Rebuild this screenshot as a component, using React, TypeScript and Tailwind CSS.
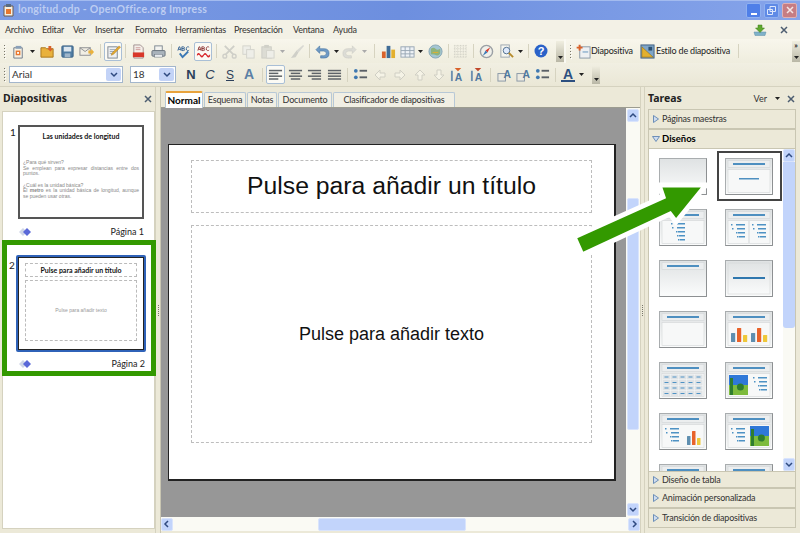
import React from "react";

const S = ({ w, children }: { w: string; children?: React.ReactNode }) => (
  <div className={`${w} h-full flex items-center justify-center shrink-0`}>{children}</div>
);
const Sep = ({ w }: { w: string }) => (
  <div className={`${w} h-full flex items-center justify-center shrink-0`}>
    <div className="w-px h-[14px] bg-[#d6d3c0]" />
  </div>
);
const Drop = ({ w, c = "#222" }: { w: string; c?: string }) => (
  <div className={`${w} h-full flex items-center justify-center shrink-0`}>
    <svg width="5" height="3" viewBox="0 0 5 3"><path d="M0 0h5L2.500 3z" fill={c} /></svg>
  </div>
);
const Grip = () => (
  <div className="w-[8px] shrink-0 h-full flex flex-col items-center justify-center gap-[2px]">
    {[0, 1, 2, 3, 4].map((i) => <div key={i} className="w-[1px] h-[1px] bg-[#77766a] shadow-[1px_1px_0_#fff]" />)}
  </div>
);
const Toggle = ({ w, children }: { w: string; children: React.ReactNode }) => (
  <div className={`${w} h-[19px] flex items-center justify-center shrink-0 bg-[#fbfaf4] border border-[#a9bfd6] rounded-[2px]`}>{children}</div>
);
const Over = ({ cls }: { cls: string }) => (
  <div className={`${cls} w-[8px] bg-gradient-to-b from-[#f0eee0] to-[#b9b7a6] flex items-end justify-center pb-[3px] shrink-0`}>
    <svg width="5" height="3" viewBox="0 0 5 3"><path d="M0 0h5L2.500 3z" fill="#222" /></svg>
  </div>
);

const I = ({ children }: { children: React.ReactNode }) => <svg width="15" height="15" viewBox="0 0 16 16">{children}</svg>;

const New = () => <I><path d="M3 4h9v11H3z" fill="#f6f1e4" stroke="#6e7a8a" /><path d="M5 2h6v3H5z" fill="#8aa0b8" /><rect x="5" y="7" width="5" height="5" fill="#e8772e" /><rect x="6.500" y="8.500" width="2" height="2" fill="#fff" /></I>;
const Open = () => <I><path d="M1 4h5l1 1h7v9H1z" fill="#e9b13c" stroke="#a9761c" /><path d="M9 2l3 0 0 3 2 0-3 3-3-3 1 0z" fill="#d9622b" /></I>;
const Save = () => <I><rect x="2" y="2" width="12" height="12" rx="1" fill="#4f7ca3" stroke="#3b6185" /><rect x="4" y="3" width="8" height="5" fill="#dce6ef" /><rect x="5" y="10" width="6" height="4" fill="#9fb6cb" /></I>;
const Mail = () => <I><rect x="1" y="4" width="11" height="8" fill="#f2efe4" stroke="#8b8d90" /><path d="M1 4l5.500 4L12 4" fill="none" stroke="#8b8d90" /><path d="M10 7h3V5l3 3.500-3 3.500V10h-3z" fill="#e9b13c" /></I>;
const Edit = () => <I><rect x="2" y="3" width="10" height="12" fill="#eef0f2" stroke="#7d8791" /><path d="M4 6h6M4 8h5M4 10h4" stroke="#9aa5af" /><path d="M14 2l1.500 1.500L8 11l-2.500 1 1-2.500z" fill="#e3a92e" stroke="#a9761c" strokeWidth=".5" /></I>;
const Pdf = () => <I><path d="M3 1h7l3 3v11H3z" fill="#f5f0ea" stroke="#a08f8f" /><rect x="2" y="9" width="12" height="5" fill="#d8362a" /><path d="M5 4h5M5 6h5" stroke="#c99" /></I>;
const Print = () => <I><rect x="4" y="2" width="8" height="6" fill="#f4f4f0" stroke="#7d8791" /><rect x="1" y="7" width="14" height="6" rx="1" fill="#a9b3bc" stroke="#66717c" /><rect x="4" y="11" width="8" height="3" fill="#e9ecef" stroke="#66717c" strokeWidth=".5" /></I>;
const Abc = ({ wave }: { wave?: boolean }) => (
  <I>
    <path d="M2 7l1.200-4h.8L5.200 7M2.600 5.800H4.600M6.200 3h1.600q1.200 0 1.200 1 0 1-1.200 1H6.200zM6.200 5h1.800q1.300 0 1.300 1t-1.300 1H6.200zM14 3.500q-.8-.7-1.700-.5-1.300.3-1.300 2t1.300 2q.9.2 1.700-.5" fill="none" stroke={wave ? "#8a2e2e" : "#2c5b8f"} strokeWidth=".9" />
    {wave ? <path d="M1 11q1.700-3 3.500 0t3.500 0 3.500 0 3.500 0v2q-1.700 3-3.500 0t-3.500 0-3.500 0-3.500 0z" fill="#d8262a" />
      : <path d="M4 10l3 4 6-6" fill="none" stroke="#3a78b5" strokeWidth="2" />}
  </I>
);
const Cut = () => <I><path d="M3 2l9 9M13 2l-9 9" stroke="#cfcfc8" strokeWidth="2" /><circle cx="3" cy="13" r="2" fill="none" stroke="#cfcfc8" strokeWidth="1.500" /><circle cx="13" cy="13" r="2" fill="none" stroke="#cfcfc8" strokeWidth="1.500" /></I>;
const Copy = () => <I><rect x="2" y="2" width="8" height="9" fill="#eeeee8" stroke="#d3d3cc" /><rect x="6" y="6" width="8" height="9" fill="#eeeee8" stroke="#d3d3cc" /></I>;
const Paste = () => <I><rect x="2" y="3" width="10" height="12" fill="#dcdcd4" stroke="#ccccc4" /><rect x="4.500" y="1" width="5" height="3" fill="#d0d0c8" /><rect x="7" y="7" width="8" height="8" fill="#eeeee8" stroke="#d3d3cc" /></I>;
const Brush = () => <I><path d="M14 1l1 1-6 7-2-2z" fill="#d8d8d2" /><path d="M7 7l2 2-3 5-5 1z" fill="#cfcfc8" /></I>;
const Undo = () => <I><path d="M5 2L1 6l4 4V7.500h4q3 0 3 2.500t-3 2.500H6V15h3.500Q15 15 15 10t-5.500-5H5z" fill="#6f9ac5" stroke="#3f6f9f" strokeWidth=".6" /></I>;
const Redo = () => <I><path d="M11 2l4 4-4 4V7.500H7q-3 0-3 2.500t3 2.500h3V15H6.500Q1 15 1 10t5.500-5H11z" fill="#dcdcd6" stroke="#c9c9c2" strokeWidth=".6" /></I>;
const Chart = () => <I><rect x="1" y="8" width="4" height="7" fill="#d9622b" /><rect x="6" y="2" width="4" height="13" fill="#3f6c96" /><rect x="11" y="6" width="4" height="9" fill="#e3b02e" /></I>;
const Table = () => <I><rect x="1" y="3" width="14" height="11" fill="#eef2f6" stroke="#98a6b4" /><path d="M1 7h14M1 10.500h14M5.500 3v11M10.500 3v11" stroke="#98a6b4" /></I>;
const Globe = () => <I><circle cx="8" cy="8" r="7" fill="#a4c6d3" stroke="#87a6b4" /><path d="M3 5q3-2 5 0t5 0v5q-2 3-4 2t-6-1z" fill="#8fb37c" /><path d="M5 9h6" stroke="#e3b02e" /></I>;
const Grid = () => <I><path d="M1 2h14M1 5h14M1 8h14M1 11h14M1 14h14M2 1v14M5 1v14M8 1v14M11 1v14M14 1v14" stroke="#d0cfc4" strokeDasharray="1 1" /></I>;
const Compass = () => <I><circle cx="8" cy="8" r="6.500" fill="#f0f0ea" stroke="#9ba0a5" strokeWidth="1.500" /><path d="M12 3.500L9 9 7 7z" fill="#d8362a" /><path d="M4 12.500L9 9 7 7z" fill="#3a78b5" /></I>;
const Zoom = () => <I><rect x="2" y="1" width="9" height="13" fill="#f5f5ee" stroke="#9aa5af" /><circle cx="8" cy="7" r="3.500" fill="#dfeafc" stroke="#4d6d8e" /><path d="M10.500 9.500L15 14" stroke="#b58a2a" strokeWidth="2" /></I>;
const Help = () => <svg width="14" height="14" viewBox="0 0 14 14"><circle cx="7" cy="7" r="6.500" fill="#2a62c8" /><text x="7" y="11" textAnchor="middle" fontSize="11" fontWeight="700" fill="#fff" fontFamily="Liberation Sans">?</text></svg>;
const SlideI = () => <I><rect x="4" y="3" width="11" height="12" fill="#eef0f2" stroke="#8796a5" /><path d="M1 4h3V1h3v3h3v3H7v3H4V7H1z" fill="#d9622b" transform="scale(.7)" /><rect x="7" y="8" width="6" height="1" fill="#5f8fba" /></I>;
const StyleI = () => <I><rect x="1" y="1" width="14" height="14" fill="#7ea5c8" stroke="#3f5f80" /><path d="M2 14L14 14 2 3z" fill="#e3b02e" stroke="#8f6d1a" strokeWidth=".6" /><rect x="9" y="3" width="4" height="4" fill="#2c4f70" /></I>;
const Arrow = ({ cls = "" }: { cls?: string }) => <svg className={cls} width="12" height="12" viewBox="0 0 12 12"><path d="M1 6l5-5v3h5v4H6v3z" fill="#f5f3e6" stroke="#d0cfc4" /></svg>;
const AlignI = ({ v }: { v: number }) => {
  const rows = v === 0 ? [[1, 14], [1, 10], [1, 14], [1, 10]] : v === 1 ? [[1, 14], [3, 10], [1, 14], [3, 10]] : v === 2 ? [[1, 14], [5, 10], [1, 14], [5, 10]] : [[1, 14], [1, 14], [1, 14], [1, 14]];
  return <I>{rows.map(([x, w], i) => <rect key={i} x={x} y={3 + i * 3} width={w} height="1.600" fill="#5e6368" />)}</I>;
};
const Letter = ({ t, cls }: { t: string; cls: string }) => <span className={`${cls} [font-family:'Liberation_Sans',sans-serif]`}>{t}</span>;
const TxtA = ({ top }: { top: string }) => <I><rect x="1" y="4" width="2" height="11" fill="#6c8fb0" /><text x="9" y="15" textAnchor="middle" fontSize="11" fontWeight="700" fill="#4f78a0" fontFamily="Liberation Sans">A</text><path d="M5 1h7l-3.500 3.500z" fill={top} /></I>;
const BoxA = () => <I><rect x="1" y="7" width="8" height="8" fill="#eceae0" stroke="#8796a5" /><text x="11" y="12" textAnchor="middle" fontSize="11" fontWeight="700" fill="#4f78a0" fontFamily="Liberation Sans">A</text></I>;
const Bull = () => <I><circle cx="3" cy="4" r="2" fill="#3f78b0" /><circle cx="3" cy="11" r="2" fill="#3f78b0" /><rect x="7" y="3" width="8" height="2" fill="#5a6066" /><rect x="7" y="10" width="8" height="2" fill="#5a6066" /></I>;
const Chev = ({ dir }: { dir: "u" | "d" | "l" | "r" }) => {
  const p = { u: "M1 5l3-3 3 3", d: "M1 2l3 3 3-3", l: "M5 1L2 4l3 3", r: "M3 1l3 3-3 3" }[dir];
  return <svg width="8" height="8" viewBox="0 0 8 8"><path d={p} fill="none" stroke="#2f4a80" strokeWidth="1.500" /></svg>;
};
const Combo = ({ w, t }: { w: string; t: string }) => (
  <div className={`${w} h-[17px] bg-white border border-[#a3b6cc] flex items-center shrink-0 pl-[2px]`}>
    <span className="flex-1 text-[10px] text-[#333]">{t}</span>
    <div className="w-[15px] h-[13px] mr-px rounded-[2px] bg-[#c3d3f7] flex items-center justify-center">
      <Chev dir="d" />
    </div>
  </div>
);
const ScrollBtn = ({ dir }: { dir: "u" | "d" | "l" | "r" }) => (
  <div className="w-[12px] h-[13px] shrink-0 rounded-[2px] bg-[#c2d4fb] border border-[#d9e4fc] flex items-center justify-center"><Chev dir={dir} /></div>
);
const Tri = ({ down }: { down?: boolean }) => (
  <svg width="8" height="8" viewBox="0 0 8 8" className="shrink-0">
    <path d={down ? "M.5 1.500h7L4 6.500z" : "M1.500.5v7l5-3.500z"} fill="#cfdcef" stroke="#6d8fb8" />
  </svg>
);
const X = ({ c = "#4d5d70" }: { c?: string }) => <svg width="8" height="8" viewBox="0 0 8 8"><path d="M1 1l6 6M7 1L1 7" stroke={c} strokeWidth="1.500" /></svg>;

const Tab = ({ t, w, active }: { t: string; w: string; active?: boolean }) => (
  <div className={active
    ? `${w} h-[17px] -mb-px z-10 bg-white border-x border-[#b7c8d6] border-t-2 border-t-[#e8a33d] rounded-t-[2px] flex items-center justify-center text-[10px] font-bold text-black whitespace-nowrap`
    : `${w} h-[15px] bg-[#f1efe4] border border-b-0 border-[#b7c8d6] rounded-t-[2px] flex items-center justify-center text-[9px] tracking-[-0.2px] text-[#333] whitespace-nowrap`}>{t}</div>
);

type Kind = "blank" | "center" | "bul" | "bul2" | "title" | "mid" | "box" | "chart" | "table" | "imgbul" | "bulchart" | "bulimg";
const Bullets = ({ x, y, n = 4 }: { x: number; y: number; n?: number }) => (
  <g>{Array.from({ length: n }).map((_, i) => (
    <g key={i}><rect x={x + (i > 1 ? 3 : 0) + i} y={y + i * 4} width="1.500" height="1.500" fill="#4e92c4" /><rect x={x + 5 + i} y={y + i * 4} width={9 - i} height="1.500" fill="#4e92c4" /></g>
  ))}</g>
);
const Img = ({ x, y, w, h }: { x: number; y: number; w: number; h: number }) => (
  <g><rect x={x} y={y} width={w} height={h / 2} fill="#2f78d8" /><rect x={x} y={y + h / 2} width={w} height={h / 2} fill="#7dbb3c" /><circle cx={x + w * .6} cy={y + h * .6} r="3.500" fill="#2f7d2f" /><rect x={x + 1} y={y + 3} width="3" height={h - 3} fill="#2f7d2f" /></g>
);
const Bars = ({ x, y, s = 1 }: { x: number; y: number; s?: number }) => (
  <g>{[[0, 9, "#5f8fb0"], [5, 14, "#e8622a"], [10, 7, "#eec83a"]].map(([dx, h, c], i) => (
    <rect key={i} x={x + (dx as number) * s} y={y + 14 - (h as number)} width={3.500 * s} height={h as number} fill={c as string} rx=".5" />
  ))}</g>
);
const Layout = ({ k }: { k: Kind }) => (
  <svg width="48" height="37" viewBox="0 0 48 37" className="block">
    <defs>
      <linearGradient id="lg" x1="0" y1="0" x2="0" y2="1"><stop offset="0" stopColor="#dfe2e3" /><stop offset="1" stopColor="#fbfcfc" /></linearGradient>
    </defs>
    <rect x=".5" y=".5" width="47" height="36" fill="url(#lg)" stroke="#a9adaf" />
    <path d="M.5 36.500h47V.5" fill="none" stroke="#8d9092" />
    {k !== "blank" && k !== "mid" && <>
      <rect x="3" y="2.500" width="42" height="7" fill="#eceeef" stroke="#d3d6d8" strokeWidth=".6" />
      <rect x="8" y="5" width="32" height="2" fill="#4e8fc0" />
    </>}
    {k !== "blank" && k !== "mid" && k !== "title" && <rect x="3" y="11.500" width="42" height="23" fill="#f7f8f8" stroke="#d3d6d8" strokeWidth=".6" />}
    {k === "center" && <rect x="14" y="20" width="20" height="1.500" fill="#4e8fc0" />}
    {k === "mid" && <><rect x="3" y="3" width="42" height="31" fill="none" stroke="#d3d6d8" strokeWidth=".6" /><rect x="8" y="17" width="32" height="2" fill="#2f77ae" /></>}
    {k === "bul" && <Bullets x={12} y={14} n={5} />}
    {k === "bul2" && <><Bullets x={6} y={15} /><Bullets x={27} y={15} /><rect x="23.500" y="12" width="1" height="22" fill="#d3d6d8" /></>}
    {k === "chart" && <><Bars x={6} y={17} s={1.200} /><Bars x={26} y={17} s={1.200} /></>}
    {k === "table" && Array.from({ length: 4 }).map((_, r) => Array.from({ length: 5 }).map((_, c) => (
      <g key={`${r}-${c}`}><rect x={4 + c * 8} y={12.500 + r * 5.500} width="7.500" height="5" fill="#dfe3e6" /><rect x={5.500 + c * 8} y={14.500 + r * 5.500} width="4" height="1" fill="#4e92c4" /></g>
    )))}
    {k === "imgbul" && <><Img x={4} y={13} w={19} h={20} /><Bullets x={28} y={15} /></>}
    {k === "bulchart" && <><Bullets x={6} y={15} /><Bars x={28} y={18} /></>}
    {k === "bulimg" && <><Bullets x={6} y={15} /><Img x={25} y={13} w={19} h={20} /></>}
  </svg>
);

const Panel = ({ t, down, h, bold }: { t: string; down?: boolean; h: string; bold?: boolean }) => (
  <div className={`${h} shrink-0 bg-[#ece9d8] border border-[#c9c6b2] flex items-center gap-[2px] pl-[3px] ${bold ? "font-bold text-black text-[9.500px]" : "text-[#333] text-[9px] tracking-[-0.2px]"}`}>
    <Tri down={down} /><span>{t}</span>
  </div>
);
const Just = ({ children }: { children: React.ReactNode }) => (
  <div className="text-justify [text-align-last:justify]">{children}</div>
);
const Diamond = () => (
  <svg className="ml-[1px]" width="12" height="8" viewBox="0 0 12 8"><path d="M0 4l4-4 4 4-4 4z" fill="#cfd6e8" /><path d="M4 4l4-4 4 4-4 4z" fill="#5a68d8" /></svg>
);

const rows: [Kind, Kind][] = [["blank", "center"], ["bul", "bul2"], ["title", "mid"], ["box", "chart"], ["table", "imgbul"], ["bulchart", "bulimg"], ["title", "title"]];

const menu: [string, string][] = [
  ["Archivo", "w-[37px]"], ["Editar", "w-[31px]"], ["Ver", "w-[22px]"], ["Insertar", "w-[40px]"], ["Formato", "w-[40px]"],
  ["Herramientas", "w-[59px]"], ["Presentación", "w-[59px]"], ["Ventana", "w-[40px]"], ["Ayuda", "w-[30px]"],
];

export default function App() {
  return (
    <div className="relative w-[800px] h-[533px] overflow-hidden flex flex-col bg-[#ece9d8] [font-family:Lato,'Liberation_Sans',sans-serif]">
      {/* Title bar */}
      <div className="h-[20px] shrink-0 flex items-center bg-gradient-to-r from-[#7b9be4] via-[#6d8fdf] to-[#86a4ea] pl-[3px] pr-[3px] shadow-[inset_0_1px_0_#a3bbef]">
        <svg width="12" height="14" viewBox="0 0 12 14"><path d="M1 3h9v10H1z" fill="#f6efe0" stroke="#6a5a50" /><rect x="3" y="1" width="5" height="3" fill="#596b80" /><rect x="3" y="6" width="5" height="5" fill="#e8772e" /></svg>
        <span className="ml-[3px] text-[10.500px] font-bold tracking-[0.25px] text-[#bdcdf2]">longitud.odp - OpenOffice.org Impress</span>
        <div className="ml-auto flex gap-[3px]">
          <div className="w-[15px] h-[15px] rounded-[2px] bg-[#4f7fe8] border border-[#8fb0f0] flex items-end justify-center pb-[2px]"><div className="w-[6px] h-[2px] bg-white" /></div>
          <div className="w-[15px] h-[15px] rounded-[2px] bg-[#5f8ae6] border border-[#8fb0f0] flex items-center justify-center">
            <svg width="9" height="9" viewBox="0 0 9 9"><path d="M3 .5h5.500v5H3zM.5 3.500h5v5h-5z" fill="#5f8ae6" stroke="#dfe8fb" /></svg>
          </div>
          <div className="w-[15px] h-[15px] rounded-[2px] bg-[#c67d84] border border-[#dfb0b4] flex items-center justify-center"><X c="#f5e6e6" /></div>
        </div>
      </div>
      {/* Menu bar */}
      <div className="h-[19px] shrink-0 flex items-center pl-[5px] bg-[#f3f1e6] text-[9px] tracking-[-0.2px] text-[#333]">
        {menu.map(([t, w], i) => <span key={i} className={`${w} whitespace-nowrap shrink-0`}>{t}</span>)}
        <div className="ml-auto flex items-center">
          <svg width="14" height="12" viewBox="0 0 14 12"><path d="M1 8h12l-1 3.500H2z" fill="#7fb1c8" stroke="#5f8fa8" strokeWidth=".5" /><path d="M5 1h4v3h2.500L7 8.500 2.500 4H5z" fill="#5fa82e" stroke="#3f7f1a" strokeWidth=".5" /></svg>
          <div className="w-[33px] flex justify-center pl-[1px]"><X /></div>
        </div>
      </div>
      {/* Toolbar 1 */}
      <div className="h-[24px] shrink-0 flex items-center bg-gradient-to-b from-[#f8f6ec] to-[#efedde]">
        <Grip />
        <S w="w-[20px]"><New /></S><Drop w="w-[9px]" /><S w="w-[20px]"><Open /></S><S w="w-[20px]"><Save /></S><S w="w-[19px]"><Mail /></S>
        <Sep w="w-[8px]" /><Toggle w="w-[18px]"><Edit /></Toggle><Sep w="w-[6px]" />
        <S w="w-[20px]"><Pdf /></S><S w="w-[20px]"><Print /></S><Sep w="w-[6px]" />
        <S w="w-[18px]"><Abc /></S><div className="w-[2px] shrink-0" /><Toggle w="w-[18px]"><Abc wave /></Toggle><Sep w="w-[8px]" />
        <S w="w-[19px]"><Cut /></S><S w="w-[19px]"><Copy /></S><S w="w-[19px]"><Paste /></S><Drop w="w-[10px]" c="#aaa" /><S w="w-[20px]"><Brush /></S><Sep w="w-[5px]" />
        <S w="w-[20px]"><Undo /></S><Drop w="w-[8px]" /><S w="w-[19px]"><Redo /></S><Drop w="w-[11px]" c="#aaa" /><Sep w="w-[8px]" />
        <S w="w-[20px]"><Chart /></S><S w="w-[18px]"><Table /></S><Drop w="w-[8px]" /><S w="w-[22px]"><Globe /></S><Sep w="w-[4px]" />
        <S w="w-[20px]"><Grid /></S><Sep w="w-[6px]" /><S w="w-[20px]"><Compass /></S><S w="w-[20px]"><Zoom /></S><Drop w="w-[8px]" /><Sep w="w-[8px]" />
        <S w="w-[18px]"><Help /></S>
        <div className="w-[6px] shrink-0" /><Over cls="h-[21px]" />
        <div className="w-[2px] shrink-0 self-stretch bg-[#faf9f2]" /><Grip />
        <div className="ml-[2px] shrink-0 flex items-center"><SlideI /></div>
        <span className="w-[41px] text-[9px] tracking-[-0.2px] text-[#222] whitespace-nowrap shrink-0">Diapositiva</span>
        <div className="ml-[8px] shrink-0 flex items-center"><StyleI /></div>
        <span className="ml-[1px] w-[82px] text-[9px] tracking-[-0.2px] text-[#222] whitespace-nowrap shrink-0">Estilo de diapositiva</span>
        <div className="w-px h-[14px] bg-[#d6d3c0] shrink-0" />
        <div className="ml-auto w-[8px] h-[21px] bg-gradient-to-b from-[#f0eee0] to-[#b9b7a6] flex flex-col items-center justify-between pb-[3px] shrink-0">
          <span className="text-[8px] font-bold leading-[9px] text-[#222]">»</span>
          <svg width="5" height="3" viewBox="0 0 5 3"><path d="M0 0h5L2.500 3z" fill="#222" /></svg>
        </div>
      </div>
      {/* Toolbar 2 */}
      <div className="h-[24px] shrink-0 flex items-center bg-gradient-to-b from-[#f1efe2] to-[#eae7d6] border-b border-[#d5d2bf]">
        <Grip />
        <div className="w-px shrink-0" />
        <Combo w="w-[114px]" t="Arial" />
        <div className="w-[7px] shrink-0" />
        <Combo w="w-[46px]" t="18" />
        <div className="w-[6px] shrink-0" />
        <S w="w-[18px]"><Letter t="N" cls="text-[13px] font-bold text-[#2c3f5a]" /></S>
        <S w="w-[20px]"><Letter t="C" cls="text-[13px] italic text-[#2c3f5a]" /></S>
        <S w="w-[20px]"><Letter t="S" cls="text-[12px] underline text-[#2c3f5a]" /></S>
        <S w="w-[18px]"><Letter t="A" cls="text-[14px] font-bold text-[#5b7fa5]" /></S>
        <Sep w="w-[8px]" />
        <Toggle w="w-[19px]"><AlignI v={0} /></Toggle>
        <S w="w-[20px]"><AlignI v={1} /></S>
        <S w="w-[19px]"><AlignI v={2} /></S>
        <S w="w-[20px]"><AlignI v={3} /></S>
        <Sep w="w-[6px]" />
        <S w="w-[20px]"><Bull /></S>
        <S w="w-[20px]"><Arrow /></S>
        <S w="w-[20px]"><Arrow cls="rotate-180" /></S>
        <S w="w-[19px]"><Arrow cls="rotate-90" /></S>
        <S w="w-[19px]"><Arrow cls="-rotate-90" /></S>
        <S w="w-[19px]"><TxtA top="#d9622b" /></S>
        <S w="w-[20px]"><TxtA top="#c0472b" /></S>
        <Sep w="w-[7px]" />
        <S w="w-[20px]"><BoxA /></S>
        <S w="w-[19px]"><BoxA /></S>
        <S w="w-[19px]"><Bull /></S>
        <Sep w="w-[6px]" />
        <S w="w-[19px]">
          <svg width="16" height="16" viewBox="0 0 16 16"><text x="8" y="12" textAnchor="middle" fontSize="14" fontWeight="700" fill="#2c4f80" fontFamily="Liberation Sans">A</text><rect x="1" y="13" width="14" height="2" fill="#2c4f80" /></svg>
        </S>
        <Drop w="w-[8px]" />
        <div className="w-[7px] shrink-0" />
        <Over cls="h-[18px] self-end mb-[2px]" />
      </div>
      {/* Main */}
      <div className="flex-1 min-h-0 flex">
        {/* Left panel */}
        <div className="w-[155px] shrink-0 flex flex-col pl-[2px] relative pb-[4px]">
          <div className="h-[24px] shrink-0 flex items-center justify-between pr-[3px] pl-px">
            <span className="text-[10.500px] font-bold text-[#222] [font-family:'Noto_Sans',sans-serif]">Diapositivas</span>
            <X />
          </div>
          <div className="flex-1 bg-white border border-[#d5d2bf] pl-[15px] pr-[10px] pt-[13px] flex flex-col">
            <div className="relative w-[126px] h-[94px] border-2 border-[#555] bg-white px-[3px] flex flex-col shrink-0">
              <div className="absolute -left-[10px] top-0 text-[10px] leading-[10px] text-[#222]">1</div>
              <div className="text-center text-[7px] font-bold text-[#111] mt-[3px] mb-[17px] leading-[13px]">Las unidades de longitud</div>
              <div className="text-[5px] leading-[5.500px] text-[#888] [font-family:'Liberation_Sans',sans-serif]">
                <div>¿Para qué sirven?</div>
                <Just>Se emplean para expresar distancias entre dos</Just>
                <div>puntos.</div>
                <div className="h-[6px]" />
                <div>¿Cuál es la unidad básica?</div>
                <Just>El <b>metro</b> es la unidad básica de longitud, aunque</Just>
                <div>se pueden usar otras.</div>
              </div>
            </div>
            <div className="h-[25px] flex items-center justify-between shrink-0 w-[126px]">
              <Diamond />
              <span className="text-[9px] text-[#222]">Página 1</span>
            </div>
            <div className="h-[11px] shrink-0" />
            <div className="relative -ml-[2px] w-[130px] h-[97px] border-2 border-[#2f62b8] rounded-[2px] shrink-0 bg-white">
              <div className="absolute -left-[9px] top-[3px] text-[10px] leading-[10px] text-[#222]">2</div>
              <div className="w-full h-full border border-[#222] px-[6px] pt-[5px] flex flex-col gap-[3px]">
                <div className="h-[14px] border border-dashed border-[#bbb] flex items-center justify-center text-[7px] font-bold text-[#111] whitespace-nowrap">Pulse para añadir un título</div>
                <div className="h-[61px] border border-dashed border-[#bbb] flex items-center justify-center text-[5px] text-[#999] [font-family:'Liberation_Sans',sans-serif]">Pulse para añadir texto</div>
              </div>
            </div>
            <div className="h-[24px] flex items-center justify-between shrink-0 w-[127px]">
              <Diamond />
              <span className="text-[9px] text-[#222]">Página 2</span>
            </div>
          </div>
          <div className="absolute left-[2px] top-[153px] w-[154px] h-[136px] border-[5px] border-[#339900] z-10" />
        </div>
        {/* Splitter */}
        <div className="w-[5px] shrink-0 flex items-center justify-center border-l border-[#d5d2bf]">
          <div className="flex flex-col gap-[1px]">{[0, 1, 2, 3, 4, 5].map((i) => <div key={i} className="w-px h-px bg-[#77766a]" />)}</div>
        </div>
        {/* Center */}
        <div className="w-[480px] shrink-0 flex flex-col pb-[2px] border-l border-[#c9c6b2]">
          <div className="h-[21px] shrink-0 flex items-end pl-[4px] gap-[1px] border-b border-[#9c9c90] bg-[#ece9d8]">
            <Tab t="Normal" w="w-[38px]" active />
            <Tab t="Esquema" w="w-[42px]" />
            <Tab t="Notas" w="w-[30px]" />
            <Tab t="Documento" w="w-[54px]" />
            <Tab t="Clasificador de diapositivas" w="w-[122px]" />
          </div>
          <div className="flex-1 min-h-0 flex">
            <div className="flex-1 bg-[#979797] pl-[7px] pt-[36px]">
              <div className="w-[448px] h-[337px] bg-white border-l border-t border-[#222] border-r-[2px] border-b-[2px] pl-[22px] pr-[22px] pt-[15px] flex flex-col gap-[12px]">
                <div className="h-[53px] pb-[2px] border border-dashed border-[#bdbdbd] flex items-center justify-center text-[24.750px] text-[#111] [font-family:'Liberation_Sans',sans-serif]">Pulse para añadir un título</div>
                <div className="h-[218px] border border-dashed border-[#bdbdbd] flex items-center justify-center text-[18px] text-[#111] [font-family:'Liberation_Sans',sans-serif]">Pulse para añadir texto</div>
              </div>
            </div>
            <div className="w-[14px] shrink-0 bg-[#fafaf4] flex flex-col items-center py-px">
              <ScrollBtn dir="u" />
              <div className="h-[76px] shrink-0" />
              <div className="w-[12px] h-[232px] rounded-[2px] bg-[#c2d4fb] border border-[#d9e4fc] shrink-0" />
              <div className="flex-1" />
              <ScrollBtn dir="d" />
            </div>
          </div>
          <div className="h-[14px] shrink-0 flex items-center bg-[#fafaf4]">
            <ScrollBtn dir="l" />
            <div className="w-[145px] shrink-0" />
            <div className="w-[148px] h-[13px] rounded-[2px] bg-[#c2d4fb] border border-[#d9e4fc] shrink-0" />
            <div className="flex-1" />
            <ScrollBtn dir="r" />
          </div>
        </div>
        {/* Splitter */}
        <div className="w-[5px] shrink-0 border-x border-[#d5d2bf] flex items-center justify-center">
          <div className="flex flex-col gap-[1px]">{[0, 1, 2, 3, 4, 5].map((i) => <div key={i} className="w-px h-px bg-[#77766a]" />)}</div>
        </div>
        {/* Right panel */}
        <div className="flex-1 min-w-0 flex flex-col pl-[3px] pr-[4px] pb-[5px]">
          <div className="h-[22px] shrink-0 flex items-center pr-[1px] pt-[1px]">
            <span className="text-[10.500px] font-bold text-[#222] [font-family:'Noto_Sans',sans-serif]">Tareas</span>
            <span className="ml-auto text-[9px] text-[#333]">Ver</span>
            <svg className="ml-[8px]" width="5" height="3" viewBox="0 0 5 3"><path d="M0 0h5L2.500 3z" fill="#222" /></svg>
            <div className="ml-[7px]"><X /></div>
          </div>
          <Panel t="Páginas maestras" h="h-[20px]" />
          <Panel t="Diseños" h="h-[20px]" down bold />
          <div className="flex-1 min-h-0 flex bg-white border-x border-[#c9c6b2]">
            <div className="flex-1 overflow-hidden pl-[10px] pt-[9px] grid grid-cols-[66px_48px] auto-rows-[51px] relative">
              {rows.map(([a, b], i) => (
                <React.Fragment key={i}>
                  <Layout k={a} />
                  <Layout k={b} />
                </React.Fragment>
              ))}
              <div className="absolute left-[68px] top-[2px] w-[65px] h-[50px] border-[2px] border-[#444]" />
            </div>
            <div className="w-[12px] shrink-0 bg-[#fafaf4] flex flex-col items-center">
              <ScrollBtn dir="u" />
              <div className="w-[12px] h-[166px] rounded-b-[3px] bg-[#c2d4fb] shrink-0" />
              <div className="flex-1" />
              <ScrollBtn dir="d" />
            </div>
          </div>
          <Panel t="Diseño de tabla" h="h-[17px]" />
          <Panel t="Animación personalizada" h="h-[20px]" />
          <Panel t="Transición de diapositivas" h="h-[20px]" />
        </div>
      </div>
      {/* Arrow callout */}
      <svg className="absolute left-0 top-0 pointer-events-none z-20" width="800" height="533" viewBox="0 0 800 533">
        <path d="M706 185L659 185L663 197L574 237L582 255L670 214L676 222Z" fill="#339900" stroke="#fff" strokeWidth="5" strokeLinejoin="miter" />
      </svg>
    </div>
  );
}
